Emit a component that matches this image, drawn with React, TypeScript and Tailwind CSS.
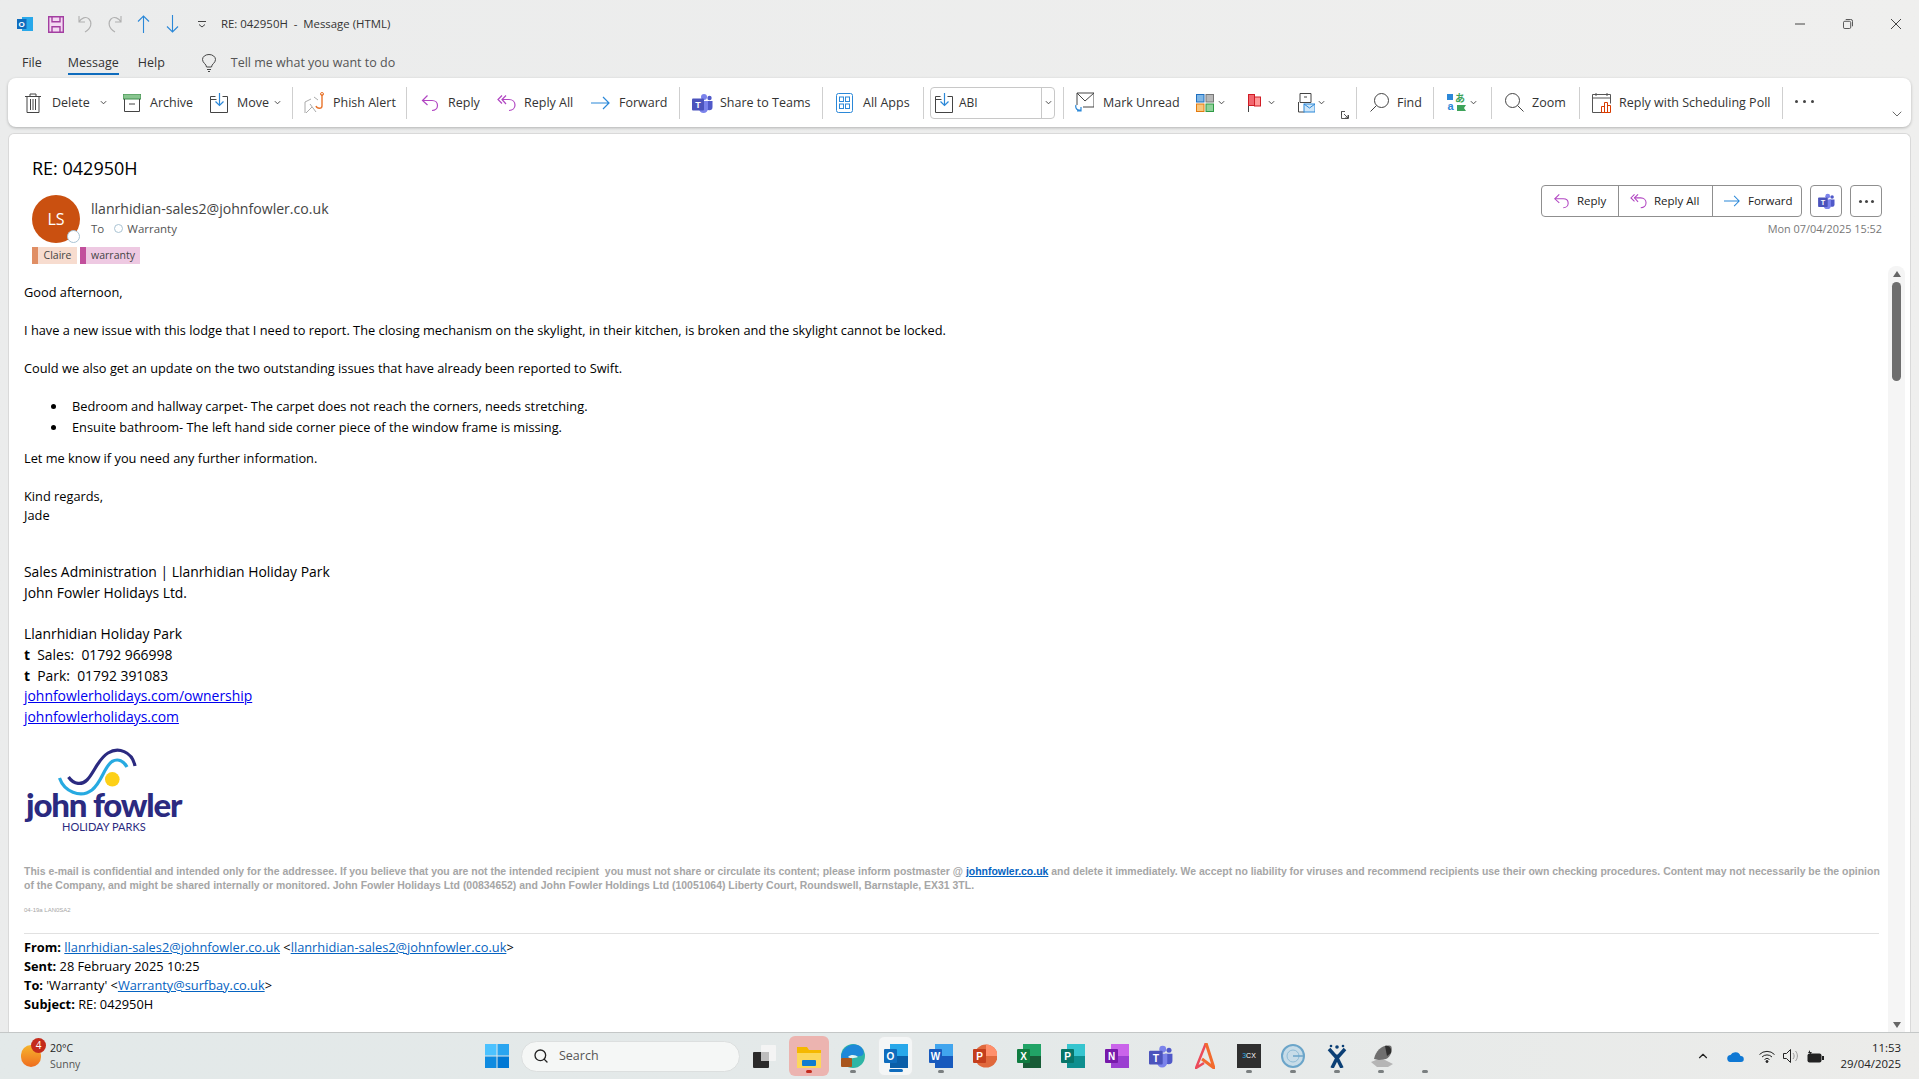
import { ReactNode } from "react";
import { ChevronDown, ChevronUp, Search } from "lucide-react";

const Chev = ({ className = "" }: { className?: string }) => (
  <svg viewBox="0 0 8 5" className={`w-[7px] h-[5px] shrink-0 ${className}`} fill="none" stroke="#444" strokeWidth="1.1">
    <path d="M1 1l3 3 3-3" />
  </svg>
);

const ReplyIcon = ({ className = "w-[18px] h-[18px]" }: { className?: string }) => (
  <svg viewBox="0 0 18 18" className={className} fill="none" stroke="#b146c2" strokeWidth="1.2">
    <path d="M6.5 1.5L1.5 6.5l5 4.5" />
    <path d="M1.5 6.5h9.5c3.4 0 5.5 2.2 5.5 5s-2.3 5-5.5 5" />
  </svg>
);

const ReplyAllIcon = ({ className = "w-[19px] h-[18px]" }: { className?: string }) => (
  <svg viewBox="0 0 19 18" className={className} fill="none" stroke="#b146c2" strokeWidth="1.2">
    <path d="M5 1.5L1 5.5l4 4M9 1.5L5 5.5l4 4.5" />
    <path d="M5 5.5h7c3.6 0 6 2.4 6 5.5s-2.4 5.5-6 5.5" />
  </svg>
);

const ForwardIcon = ({ className = "w-[19px] h-[14px]" }: { className?: string }) => (
  <svg viewBox="0 0 19 14" className={className} fill="none" stroke="#2b88d8" strokeWidth="1.2">
    <path d="M0 7h18M12 1l6 6-6 6" />
  </svg>
);

const TeamsIcon = ({ className = "w-[21px] h-[20px]" }: { className?: string }) => (
  <svg viewBox="0 0 21 20" className={className}>
    <circle cx="12" cy="4" r="3" fill="#7b83eb" />
    <circle cx="17.5" cy="5" r="2.2" fill="#5059c9" />
    <path d="M14 8h6.5v6a3.2 3.2 0 0 1-6.5 0z" fill="#5059c9" />
    <path d="M7 8h9v7.5a4.5 4.5 0 0 1-9 0z" fill="#7b83eb" />
    <rect x="0" y="5.5" width="12" height="12" rx="1" fill="#4b53bc" />
    <text x="6" y="15" textAnchor="middle" fontSize="9" fontWeight="700" fill="#fff" fontFamily="Liberation Sans, sans-serif">T</text>
  </svg>
);

const MoveIcon = ({ className = "" }: { className?: string }) => (
  <svg viewBox="0 0 19 20" className={`w-[19px] h-[20px] ${className}`} fill="none">
    <path d="M5.5 3.5H.5v16h17v-16h-5M.5 6.5h6" stroke="#444" />
    <path d="M9.5 0v12M5.5 8.5l4 4 4-4" stroke="#2b88d8" strokeWidth="1.2" />
  </svg>
);

const Sep = ({ className = "" }: { className?: string }) => (
  <div className={`w-px h-[32px] bg-[#cfcfcf] shrink-0 ${className}`} />
);

const Item = ({ className, icon, label, gap = "gap-[10px]", children }: { className: string; icon: ReactNode; label?: string; gap?: string; children?: ReactNode }) => (
  <div className={`flex items-center shrink-0 whitespace-nowrap text-[12.5px] text-[#333] ${gap} ${className}`}>
    {icon}
    {label && <span className="pt-[1px]">{label}</span>}
    {children}
  </div>
);

const Ribbon = () => (
  <div className="mx-[8px] h-[49px] rounded-lg bg-white shadow-[0_1px_3px_rgba(0,0,0,0.25)] flex items-center pl-[17px] pr-[6px] shrink-0">
    <Item className="w-[98px]" icon={
      <svg viewBox="0 0 16 20" className="w-[16px] h-[20px]" fill="none" stroke="#444"><path d="M0 3.5h16M5 3.5V1h6v2.5M2 3.5v16h12v-16M5.5 6v11M8 6v11M10.5 6v11" /></svg>
    } gap="gap-[11px]" label="Delete"><Chev className="-ml-[1px]" /></Item>
    <Item className="w-[87px]" icon={
      <svg viewBox="0 0 18 18" className="w-[18px] h-[18px]" fill="none"><rect x="0" y="0" width="18" height="5" fill="#88c58f" stroke="#3f8d4d" /><path d="M1.5 5v12.5h15V5M6 10h6" stroke="#444" /></svg>
    } gap="gap-[9px]" label="Archive" />
    <Item className="w-[82px]" icon={<MoveIcon />} gap="gap-[8px]" label="Move"><Chev className="-ml-[3px]" /></Item>
    <Sep className="mr-[11px]" />
    <Item className="w-[102px]" icon={
      <svg viewBox="0 0 20 22" className="w-[20px] h-[22px]" fill="none"><path d="M1 10v11M1 10l6-3M6 12l6 8M2 21l6-6M10 5l4 3" stroke="#aaa" /><path d="M18 2v12c0 3-5 3-6 0" stroke="#e8742c" strokeWidth="1.4" /><circle cx="18" cy="2" r="1.5" stroke="#e8742c" /></svg>
    } gap="gap-[9px]" label="Phish Alert" />
    <Sep className="mr-[14px]" />
    <Item className="w-[76px]" icon={<ReplyIcon />} gap="gap-[9px]" label="Reply" />
    <Item className="w-[94px]" icon={<ReplyAllIcon />} gap="gap-[8px]" label="Reply All" />
    <Item className="w-[88px]" icon={<ForwardIcon />} gap="gap-[9px]" label="Forward" />
    <Sep className="mr-[12px]" />
    <Item className="w-[130px]" icon={<TeamsIcon />} gap="gap-[7px]" label="Share to Teams" />
    <Sep className="mr-[13px]" />
    <Item className="w-[87px]" icon={
      <svg viewBox="0 0 17 20" className="w-[17px] h-[20px]" fill="none" stroke="#2b88d8"><rect x=".5" y=".5" width="16" height="19" rx="2" /><rect x="3.5" y="4" width="4" height="4.5" /><rect x="9.5" y="4" width="4" height="4.5" /><rect x="3.5" y="11" width="4" height="4.5" /><rect x="9.5" y="11" width="4" height="4.5" /></svg>
    } label="All Apps" />
    <Sep className="mr-[6px]" />
    <div className="w-[125px] h-[32px] shrink-0 rounded border border-[#c8c8c8] flex items-center text-[12px] text-[#333]">
      <div className="flex-1 flex items-center gap-[5px] pl-[4px]"><MoveIcon />ABI</div>
      <div className="w-[13px] h-full border-l border-[#c8c8c8] flex items-center justify-center"><Chev /></div>
    </div>
    <Sep className="ml-[8px] mr-[11px]" />
    <Item className="w-[121px]" icon={
      <svg viewBox="0 0 19 21" className="w-[19px] h-[21px]" fill="none"><path d="M2 13V1h17v14H8M2 1l8 8 9-8" stroke="#444" /><path d="M1 13c-1 3 1 6 5 5M6 15v4H2" stroke="#2b88d8" strokeWidth="1.2" /></svg>
    } gap="gap-[9px]" label="Mark Unread" />
    <Item className="w-[52px]" icon={
      <svg viewBox="0 0 18 18" className="w-[18px] h-[18px]"><rect x=".5" y=".5" width="7.5" height="7.5" fill="#7fb7e6" stroke="#1f6fbf" /><rect x="10" y=".5" width="7.5" height="7.5" fill="#b8b8b8" stroke="#777" /><rect x=".5" y="10" width="7.5" height="7.5" fill="#f8c77e" stroke="#e27a10" /><rect x="10" y="10" width="7.5" height="7.5" fill="#8fd39a" stroke="#2f9a45" /></svg>
    } gap="gap-[4px]"><Chev /></Item>
    <Item className="w-[50px]" icon={
      <svg viewBox="0 0 13 18" className="w-[13px] h-[18px]" fill="none"><path d="M.5 0v18" stroke="#444" /><rect x=".5" y=".5" width="6" height="11" fill="#f1666e" stroke="#d01c25" /><rect x="6.5" y="3" width="6" height="9" fill="#f99" stroke="#d01c25" /></svg>
    } gap="gap-[7px]"><Chev /></Item>
    <Item className="w-[43px]" icon={
      <svg viewBox="0 0 17 20" className="w-[17px] h-[20px]" fill="none"><path d="M2 .5h11v9H2zM6 4h3M.5 9v10h6" stroke="#444" /><rect x="6" y="11" width="11" height="8" fill="#cfe6f8" stroke="#2b88d8" /><path d="M6 11l5.5 4 5.5-4" stroke="#2b88d8" /></svg>
    } gap="gap-[3px]"><Chev /></Item>
    <div className="w-[15px] h-[32px] shrink-0 flex items-end">
      <svg viewBox="0 0 8 8" className="w-[8px] h-[8px]" fill="none" stroke="#444"><path d="M.5 4V.5h3.5M.5 .5v7h7V4M3 3l4 4M7 4v3H4" strokeWidth=".9" /></svg>
    </div>
    <Sep className="mr-[13px]" />
    <Item className="w-[63px]" icon={
      <svg viewBox="0 0 19 19" className="w-[19px] h-[19px]" fill="none" stroke="#444"><circle cx="11.5" cy="7.5" r="7" /><path d="M6.5 12.5L.5 18.5" /></svg>
    } gap="gap-[8px]" label="Find" />
    <Sep className="mr-[13px]" />
    <Item className="w-[44px]" icon={
      <svg viewBox="0 0 19 19" className="w-[19px] h-[19px]">
        <rect x="0" y="1" width="6" height="6" fill="#2b88d8" />
        <text x="3.500" y="17" textAnchor="middle" fontSize="11" fontWeight="700" fill="#2b88d8" fontFamily="Liberation Sans, sans-serif">a</text>
        <text x="13" y="9" textAnchor="middle" fontSize="10" fontWeight="700" fill="#3da35a" fontFamily="Noto Sans CJK JP, sans-serif">あ</text>
        <path d="M10 12h9l-2 3 2 3h-9z" fill="#3da35a" />
      </svg>
    } gap="gap-[4px]"><Chev /></Item>
    <Sep className="mr-[13px]" />
    <Item className="w-[74px]" icon={
      <svg viewBox="0 0 19 19" className="w-[19px] h-[19px]" fill="none" stroke="#444"><circle cx="7.5" cy="7.5" r="7" /><path d="M12.5 12.5l6 6" /></svg>
    } gap="gap-[8px]" label="Zoom" />
    <Sep className="mr-[12px]" />
    <Item className="w-[190px]" icon={
      <svg viewBox="0 0 20 20" className="w-[20px] h-[20px]" fill="none"><path d="M10 19.5H.5V1.5h18v9M.5 5h18M4 0v3M15 0v3" stroke="#555" /><path d="M9.5 19.5v-6h3v6M12.5 19.5V9.5h3v10M15.5 19.5v-7h3v7M9.5 19.5h9" stroke="#d83b01" /></svg>
    } gap="gap-[7px]" label="Reply with Scheduling Poll" />
    <Sep className="mr-[12px]" />
    <div className="flex gap-[5px] shrink-0 -mt-[2px]">
      <span className="w-[3px] h-[3px] rounded-full bg-[#444]" />
      <span className="w-[3px] h-[3px] rounded-full bg-[#444]" />
      <span className="w-[3px] h-[3px] rounded-full bg-[#444]" />
    </div>
    <ChevronDown className="ml-auto mt-[22px] w-[16px] h-[16px] text-[#444]" strokeWidth={1.2} />
  </div>
);

const TitleBar = () => (
  <div className="h-[48px] flex items-center pl-[17px] shrink-0 text-[11.4px] text-[#333]">
    <svg viewBox="0 0 16 16" className="w-[16px] h-[16px] mr-[15px]"><rect x="5" y="1" width="11" height="14" fill="#28a8ea" /><rect x="0" y="3" width="9.5" height="10" fill="#0f6cbd" /><text x="4.7" y="11.2" textAnchor="middle" fontSize="8" fontWeight="700" fill="#fff" fontFamily="Liberation Sans, sans-serif">O</text></svg>
    <svg viewBox="0 0 16 17" className="w-[16px] h-[17px] mr-[14px]" fill="none" stroke="#a33ea1" strokeWidth="1.4"><path d="M.7.7h14.6v15.6H.7z" fill="#f3d9f2" /><path d="M4 .7v5h8v-5M4 16.3v-5.5h8v5.5" /></svg>
    <svg viewBox="0 0 16 18" className="w-[16px] h-[18px] mr-[12px]" fill="none" stroke="#b0b0b0" strokeWidth="1.1"><path d="M1 1v6h6M1 7c2-4 7-6 10-3s3 9-4 13" /></svg>
    <svg viewBox="0 0 16 18" className="w-[16px] h-[18px] mr-[15px]" fill="none" stroke="#b0b0b0" strokeWidth="1.1"><path d="M15 1v6H9M15 7c-2-4-7-6-10-3s-3 9 4 13" /></svg>
    <svg viewBox="0 0 13 18" className="w-[13px] h-[18px] mr-[16px]" fill="none" stroke="#2b88d8" strokeWidth="1.1"><path d="M6.5 1v17M1 6.5L6.5 1 12 6.5" /></svg>
    <svg viewBox="0 0 13 18" className="w-[13px] h-[18px] mr-[19px]" fill="none" stroke="#2b88d8" strokeWidth="1.1"><path d="M6.5 0v17M1 11.5L6.5 17l5.5-5.5" /></svg>
    <svg viewBox="0 0 8 7" className="w-[8px] h-[7px] mr-[15px]" fill="none" stroke="#444"><path d="M0 .5h8M1 3.5L4 6l3-2.5" /></svg>
    <span className="whitespace-pre">RE: 042950H  -  Message (HTML)</span>
    <div className="ml-auto flex items-center pr-[18px] gap-[38px]">
      <svg viewBox="0 0 10 10" className="w-[10px] h-[10px]" fill="none" stroke="#444"><path d="M0 5h10" /></svg>
      <svg viewBox="0 0 11 11" className="w-[10px] h-[10px]" fill="none" stroke="#444"><rect x=".5" y="2.5" width="8" height="8" rx="1.5" /><path d="M3 .5h5.5a2 2 0 0 1 2 2V8" /></svg>
      <svg viewBox="0 0 10 10" className="w-[10px] h-[10px]" fill="none" stroke="#444"><path d="M0 0l10 10M10 0L0 10" /></svg>
    </div>
  </div>
);

const Tabs = () => (
  <div className="h-[30px] flex items-center pl-[22px] shrink-0 text-[12.5px] text-[#333]">
    <span className="mr-[26px]">File</span>
    <span className="mr-[19px] h-[24px] pt-[3px] font-medium border-b-2 border-[#0f6cbd]">Message</span>
    <span className="mr-[37px]">Help</span>
    <svg viewBox="0 0 14 18" className="w-[14px] h-[18px] mr-[15px]" fill="none" stroke="#444"><path d="M4.5 13c0-3-4-4-4-7.5a6.5 5 0 0 1 13 0c0 3.500-4 4.500-4 7.500zM5 15.500h4M6 17.500h2" /></svg>
    <span className="text-[#555]">Tell me what you want to do</span>
  </div>
);

const MailLink = ({ children }: { children: ReactNode }) => (
  <a className="text-[#0563c1] underline">{children}</a>
);

const SigLink = ({ children }: { children: ReactNode }) => (
  <a className="text-[#0000ee] underline">{children}</a>
);

const Logo = () => (
  <div className="mt-[19px] w-[160px] h-[89px] flex flex-col shrink-0">
    <svg viewBox="0 0 160 52" className="w-[160px] h-[52px] shrink-0" fill="none">
      <path d="M44.500 30C50 38 58 38 63 33C70 26 74 12 84 6C94 0 108 4 111 19" stroke="#2b2a80" strokeWidth="3.200" />
      <path d="M35.500 31C40 44 56 52 68 43C78 35 80 20 88 14.500C94 11 100 14 103 20" stroke="#27aae1" strokeWidth="3.200" />
      <circle cx="88.300" cy="32.300" r="7.300" fill="#fdd017" />
    </svg>
    <div className="-mt-[10px] pl-[2px] text-[33px] leading-[30px] font-black font-['Lato',sans-serif] text-[#2b2a80] tracking-[-1.2px] whitespace-nowrap">john fowler</div>
    <div className="mt-[2px] pl-[38px] text-[11px] leading-[11px] font-['Lato',sans-serif] text-[#2b2a80] whitespace-nowrap">HOLIDAY PARKS</div>
  </div>
);

const Bullet = ({ children }: { children: ReactNode }) => (
  <li className="flex items-center">
    <span className="w-[5px] h-[5px] rounded-full bg-black mr-[16px]" />
    {children}
  </li>
);

const MessageBody = () => (
  <div className="mt-[19px] pl-[15px] text-[12.800px] leading-[19px] text-black whitespace-nowrap">
    <p>Good afternoon,</p>
    <p className="mt-[19px]">I have a new issue with this lodge that I need to report. The closing mechanism on the skylight, in their kitchen, is broken and the skylight cannot be locked.</p>
    <p className="mt-[19px]">Could we also get an update on the two outstanding issues that have already been reported to Swift.</p>
    <ul className="mt-[19px] pl-[27px] flex flex-col gap-[2px]">
      <Bullet>Bedroom and hallway carpet- The carpet does not reach the corners, needs stretching.</Bullet>
      <Bullet>Ensuite bathroom- The left hand side corner piece of the window frame is missing.</Bullet>
    </ul>
    <p className="mt-[12px]">Let me know if you need any further information.</p>
    <p className="mt-[19px]">Kind regards,</p>
    <p>Jade</p>
    <div className="mt-[37px] text-[13.900px] leading-[20.700px]">
      <p>Sales Administration | Llanrhidian Holiday Park</p>
      <p>John Fowler Holidays Ltd.</p>
      <p className="mt-[20.700px]">Llanrhidian Holiday Park</p>
      <p><b>t</b>&nbsp; Sales:&nbsp; 01792 966998</p>
      <p><b>t</b>&nbsp; Park:&nbsp; 01792 391083</p>
      <p><SigLink>johnfowlerholidays.com/ownership</SigLink></p>
      <p><SigLink>johnfowlerholidays.com</SigLink></p>
    </div>
    <Logo />
    <div className="mt-[29px] font-['Liberation_Sans',sans-serif] font-bold text-[10.460px] leading-[14px] text-[#a6a6a6]">
      This e-mail is confidential and intended only for the addressee. If you believe that you are not the intended recipient &nbsp;you must not share or circulate its content; please inform postmaster @ <MailLink>johnfowler.co.uk</MailLink> and delete it immediately. We accept no liability for viruses and recommend recipients use their own checking procedures. Content may not necessarily be the opinion
      <br />
      of the Company, and might be shared internally or monitored. John Fowler Holidays Ltd (00834652) and John Fowler Holdings Ltd (10051064) Liberty Court, Roundswell, Barnstaple, EX31 3TL.
    </div>
    <div className="mt-[12px] font-['Liberation_Sans',sans-serif] text-[6px] leading-[10px] text-[#a6a6a6]">04-19a LAN0SA2</div>
    <div className="mt-[18px] w-[1855px] border-t border-[#e1e1e1] pt-[4px]">
      <p><b>From:</b> <MailLink>llanrhidian-sales2@johnfowler.co.uk</MailLink> &lt;<MailLink>llanrhidian-sales2@johnfowler.co.uk</MailLink>&gt;</p>
      <p><b>Sent:</b> 28 February 2025 10:25</p>
      <p><b>To:</b> 'Warranty' &lt;<MailLink>Warranty@surfbay.co.uk</MailLink>&gt;</p>
      <p><b>Subject:</b> RE: 042950H</p>
    </div>
  </div>
);

const MessagePanel = () => (
  <div className="relative mt-[6px] mx-[8px] flex-1 min-h-0 overflow-hidden rounded-t-md bg-white border-l border-t border-r border-[#d9d9d9]">
    <div className="mt-[22px] pl-[23px] h-[24px] text-[18px] leading-[24px] text-black">RE: 042950H</div>
    <div className="mt-[5px] flex justify-between pr-[28px]">
      <div className="pt-[10px] pl-[23px]">
        <div className="flex">
          <div className="relative w-[48px] h-[48px] rounded-full bg-[#ca5010] text-white text-[16px] flex items-center justify-center">
            LS
            <span className="absolute right-0 bottom-0 w-[13px] h-[13px] rounded-full bg-white border border-[#a9c3d3]" />
          </div>
          <div className="ml-[11px] pt-[4px]">
            <div className="text-[14.100px] leading-[20px] text-[#444]">llanrhidian-sales2@johnfowler.co.uk</div>
            <div className="flex items-center text-[11.500px] leading-[19px] text-[#555]">
              To
              <span className="ml-[10px] mr-[4px] w-[9px] h-[9px] rounded-full border border-[#a9c3d3]" />
              Warranty
            </div>
          </div>
        </div>
        <div className="mt-[4px] flex gap-[3px] text-[10.500px] leading-[17px] text-[#444]">
          <span className="w-[45px] h-[17px] bg-[#f7dccf] border-l-[6px] border-[#e08e64] text-center">Claire</span>
          <span className="w-[60px] h-[17px] bg-[#eec9e2] border-l-[6px] border-[#c24f9c] text-center">warranty</span>
        </div>
      </div>
      <div className="flex flex-col items-end">
        <div className="flex gap-[8px]">
          <div className="flex h-[32px] rounded border border-[#8f8f8f] text-[11.500px] text-[#222]">
            <div className="w-[77px] flex items-center gap-[7px] pl-[11px] border-r border-[#8f8f8f]"><ReplyIcon className="w-[17px] h-[16px]" />Reply</div>
            <div className="w-[94px] flex items-center gap-[7px] pl-[11px] border-r border-[#8f8f8f]"><ReplyAllIcon className="w-[17px] h-[16px]" />Reply All</div>
            <div className="w-[88px] flex items-center gap-[8px] pl-[11px]"><ForwardIcon className="w-[16px] h-[12px]" />Forward</div>
          </div>
          <div className="w-[32px] h-[32px] rounded border border-[#8f8f8f] flex items-center justify-center"><TeamsIcon className="w-[17px] h-[16px]" /></div>
          <div className="w-[32px] h-[32px] rounded border border-[#8f8f8f] flex items-center justify-center gap-[3px]">
            <span className="w-[3px] h-[3px] rounded-full bg-[#444]" />
            <span className="w-[3px] h-[3px] rounded-full bg-[#444]" />
            <span className="w-[3px] h-[3px] rounded-full bg-[#444]" />
          </div>
        </div>
        <div className="mt-[3px] text-[10.900px] leading-[18px] text-[#777]">Mon 07/04/2025 15:52</div>
      </div>
    </div>
    <MessageBody />
    <div className="absolute right-[5px] top-[132px] bottom-0 w-[17px] bg-[#f5f5f5] rounded-t-lg flex flex-col items-center pt-[5px]">
      <span className="w-0 h-0 border-x-[4px] border-x-transparent border-b-[6px] border-b-[#666]" />
      <span className="mt-[5px] w-[9px] h-[99px] rounded-full bg-[#6e6e6e]" />
      <span className="mt-auto mb-[4px] w-0 h-0 border-x-[4px] border-x-transparent border-t-[6px] border-t-[#666]" />
    </div>
  </div>
);

const Tile = ({ bg, letter, tone, back }: { bg: string; letter: string; tone: string; back: string }) => (
  <svg viewBox="0 0 24 24" className="w-[24px] h-[24px]">
    <rect x="6" y="0" width="18" height="24" fill={back} />
    <rect x="6" y="12" width="18" height="12" fill={tone} />
    <rect x="0" y="5" width="13" height="14" rx="1" fill={bg} />
    <text x="6.500" y="16" textAnchor="middle" fontSize="10" fontWeight="700" fill="#fff" fontFamily="Liberation Sans, sans-serif">{letter}</text>
  </svg>
);

const Dot = ({ className = "bg-[#7a7f80] w-[6px]" }: { className?: string }) => (
  <span className={`absolute bottom-[3px] left-1/2 -translate-x-1/2 h-[3px] rounded-full ${className}`} />
);

const TaskApp = ({ children, dot, className = "" }: { children: ReactNode; dot?: ReactNode; className?: string }) => (
  <div className={`relative w-[44px] h-[40px] shrink-0 flex items-center justify-center ${className}`}>
    {children}
    {dot}
  </div>
);

const Taskbar = () => (
  <div className="h-[47px] shrink-0 border-t border-[#c4c7c7] bg-gradient-to-r from-[#e3e9e9] via-[#e4e9e9] to-[#ececea] flex items-center">
    <div className="relative w-[484px] shrink-0 h-full pl-[50px] pt-[7px] text-[10.500px] leading-[16px] text-[#222]">
      <span className="absolute left-[21px] top-[12px] w-[20px] h-[22px] rounded-full bg-gradient-to-b from-[#f5b52e] to-[#ee6c1f]" />
      <span className="absolute left-[31px] top-[5px] w-[15px] h-[15px] rounded-full bg-[#c42b1c] text-white text-[10px] leading-[15px] text-center">4</span>
      <div>20°C</div>
      <div className="text-[#555]">Sunny</div>
    </div>
    <svg viewBox="0 0 24 24" className="w-[24px] h-[24px] shrink-0 ml-[1px]">
      <rect width="11.500" height="11.500" fill="#4cc2ff" />
      <rect x="12.500" width="11.500" height="11.500" fill="#2aa5f0" />
      <rect y="12.500" width="11.500" height="11.500" fill="#0f8be0" />
      <rect x="12.500" y="12.500" width="11.500" height="11.500" fill="#0078d4" />
    </svg>
    <div className="ml-[12px] w-[219px] h-[31px] shrink-0 rounded-full bg-[#f5f7f6] border border-[#dcdfdf] flex items-center pl-[11px] gap-[10px] text-[12.5px] text-[#555]">
      <Search className="w-[16px] h-[16px] text-[#222]" strokeWidth={2} />
      <span className="pt-[1px]">Search</span>
    </div>
    <svg viewBox="0 0 23 23" className="w-[23px] h-[23px] shrink-0 ml-[13px]">
      <rect x="8" y="0" width="15" height="16" rx="1" fill="#f4f4f4" />
      <rect x="0" y="7" width="16" height="16" rx="1" fill="#2a2a2a" />
      <rect x="8" y="7" width="8" height="9" fill="#bdbdbd" />
    </svg>
    <div className="ml-[13px] w-[40px] h-[40px] shrink-0 rounded-md bg-[#ecb4b0] relative flex items-center justify-center">
      <svg viewBox="0 0 24 24" className="w-[24px] h-[24px]"><path d="M0 3h10l2 3h12v18H0z" fill="#f5b800" /><path d="M0 9h24v15H0z" fill="#fcd75a" /><rect x="5" y="16" width="14" height="6" rx="1" fill="#0f7cd0" /></svg>
      <Dot className="bg-[#c42b1c] w-[6px]" />
    </div>
    <TaskApp className="ml-[2px]" dot={<Dot />}>
      <svg viewBox="0 0 24 24" className="w-[24px] h-[24px]"><circle cx="12" cy="12" r="12" fill="#2fb5a5" /><path d="M0 13C1 3 12-3 20 3c3 3 4 8 0 9-6 1-12 0-13 5L0 14z" fill="#1e88d8" /><path d="M7 13c3-3 8-2 10 0-3 1-7 2-10 0z" fill="#e3f4f2" /><rect x="0" y="14" width="11" height="9" rx="1" fill="#a9561d" /></svg>
    </TaskApp>
    <div className="relative w-[35px] h-[40px] ml-[3px] rounded-md bg-[#f4f6f6] border border-[#e6e9e9] shrink-0 flex items-center justify-center">
      <Tile bg="#0f6cbd" letter="O" tone="#0a5ea8" back="#28a8ea" />
      <Dot className="bg-[#0f6cbd] w-[14px]" />
    </div>
    <TaskApp className="ml-[6px]" dot={<Dot />}><Tile bg="#185abd" letter="W" tone="#185abd" back="#41a5ee" /></TaskApp>
    <TaskApp>
      <svg viewBox="0 0 24 24" className="w-[24px] h-[24px]"><circle cx="13" cy="12" r="11.500" fill="#e0683c" /><path d="M13 .5a11.500 11.500 0 0 1 11.500 11.500H13z" fill="#ff8f6b" /><rect x="0" y="5" width="13" height="14" rx="1" fill="#c43e1c" /><text x="6.500" y="16" textAnchor="middle" fontSize="10" fontWeight="700" fill="#fff" fontFamily="Liberation Sans, sans-serif">P</text></svg>
    </TaskApp>
    <TaskApp><Tile bg="#107c41" letter="X" tone="#185c37" back="#21a366" /></TaskApp>
    <TaskApp><Tile bg="#077568" letter="P" tone="#0e8f8f" back="#36c5cf" /></TaskApp>
    <TaskApp><Tile bg="#7719aa" letter="N" tone="#9b3fd1" back="#ca64ea" /></TaskApp>
    <TaskApp><TeamsIcon className="w-[24px] h-[24px]" /></TaskApp>
    <TaskApp>
      <svg viewBox="0 0 20 26" className="w-[20px] h-[26px]" fill="none"><path d="M11 0L1 25l8-5" stroke="#ec4a5a" strokeWidth="2.500" /><path d="M11 0l8 25-12-9" stroke="#f26b2e" strokeWidth="3" /></svg>
    </TaskApp>
    <TaskApp dot={<Dot />}>
      <div className="w-[24px] h-[24px] bg-[#2f2f2f] text-white text-[7px] leading-[24px] text-center font-['Liberation_Sans',sans-serif]"><span className="text-[#29a8e0]">3</span>CX</div>
    </TaskApp>
    <TaskApp dot={<Dot />}>
      <svg viewBox="0 0 24 24" className="w-[24px] h-[24px]" fill="none"><circle cx="12" cy="12" r="11" fill="#c7dce8" stroke="#6ba5c9" strokeWidth="2" /><circle cx="12" cy="12" r="6" stroke="#8fbcd6" /><path d="M12 12h11" stroke="#6ba5c9" strokeWidth="1.500" /></svg>
    </TaskApp>
    <TaskApp dot={<Dot />}>
      <svg viewBox="0 0 20 24" className="w-[20px] h-[24px]" fill="none"><circle cx="10" cy="3" r="1.800" fill="#0b3f75" /><circle cx="4" cy="2" r="1.300" fill="#0b3f75" /><circle cx="16" cy="2" r="1.300" fill="#0b3f75" /><path d="M2 5l8 9 8-9M5 24l5-10 5 10" stroke="#0b3f75" strokeWidth="3.500" /></svg>
    </TaskApp>
    <TaskApp dot={<Dot />}>
      <svg viewBox="0 0 24 24" className="w-[24px] h-[24px]"><path d="M2 18l10-4 12 6-5 3H8z" fill="#b5b5b5" /><path d="M5 15C7 6 14 0 22 2c2 3 0 11-5 13l-7 1z" fill="#6f6f6f" /><path d="M16 2c4-1 7 2 6 7l-4 3z" fill="#2f2f2f" /></svg>
    </TaskApp>
    <TaskApp dot={<Dot />}><span /></TaskApp>
    <div className="ml-auto flex items-center shrink-0 text-[#222]">
      <ChevronUp className="w-[14px] h-[14px] mr-[17px]" strokeWidth={2} />
      <svg viewBox="0 0 17 11" className="w-[17px] h-[11px] mr-[15px]"><path d="M4 11a3.500 3.500 0 0 1-.5-7A5.500 5.500 0 0 1 13.500 5 3 3 0 0 1 14 11z" fill="#0f78d4" /></svg>
      <svg viewBox="0 0 16 13" className="w-[16px] h-[13px] mr-[8px]" fill="none" stroke="#222" strokeWidth="1"><path d="M.5 4.500a10.500 10.500 0 0 1 15 0M3 7a7 7 0 0 1 10 0M5.500 9.500a3.500 3.500 0 0 1 5 0" /><circle cx="8" cy="11.500" r="1" fill="#222" /></svg>
      <svg viewBox="0 0 16 14" className="w-[16px] h-[14px] mr-[8px]" fill="none" stroke="#222"><path d="M.5 4.500h3l4-4v13l-4-4h-3z" /><path d="M10 4c1.500 2 1.500 4 0 6M12.500 2c2.500 3 2.500 7 0 10" stroke="#999" /></svg>
      <svg viewBox="0 0 17 13" className="w-[17px] h-[13px] mr-[17px]"><rect x=".5" y="3.500" width="14" height="9" rx="2" fill="#222" /><rect x="15" y="6" width="2" height="4" fill="#222" /><path d="M3 0L1 3h2L2 6l3-4H3z" fill="#222" /></svg>
      <div className="text-right text-[11.400px] leading-[16px] pr-[18px]">
        <div>11:53</div>
        <div>29/04/2025</div>
      </div>
    </div>
  </div>
);

const App = () => (
  <div className="w-screen h-screen overflow-hidden flex flex-col bg-gradient-to-r from-[#ebecec] to-[#efefee] font-['Open_Sans',sans-serif]">
    <TitleBar />
    <Tabs />
    <Ribbon />
    <MessagePanel />
    <Taskbar />
  </div>
);

export default App;
